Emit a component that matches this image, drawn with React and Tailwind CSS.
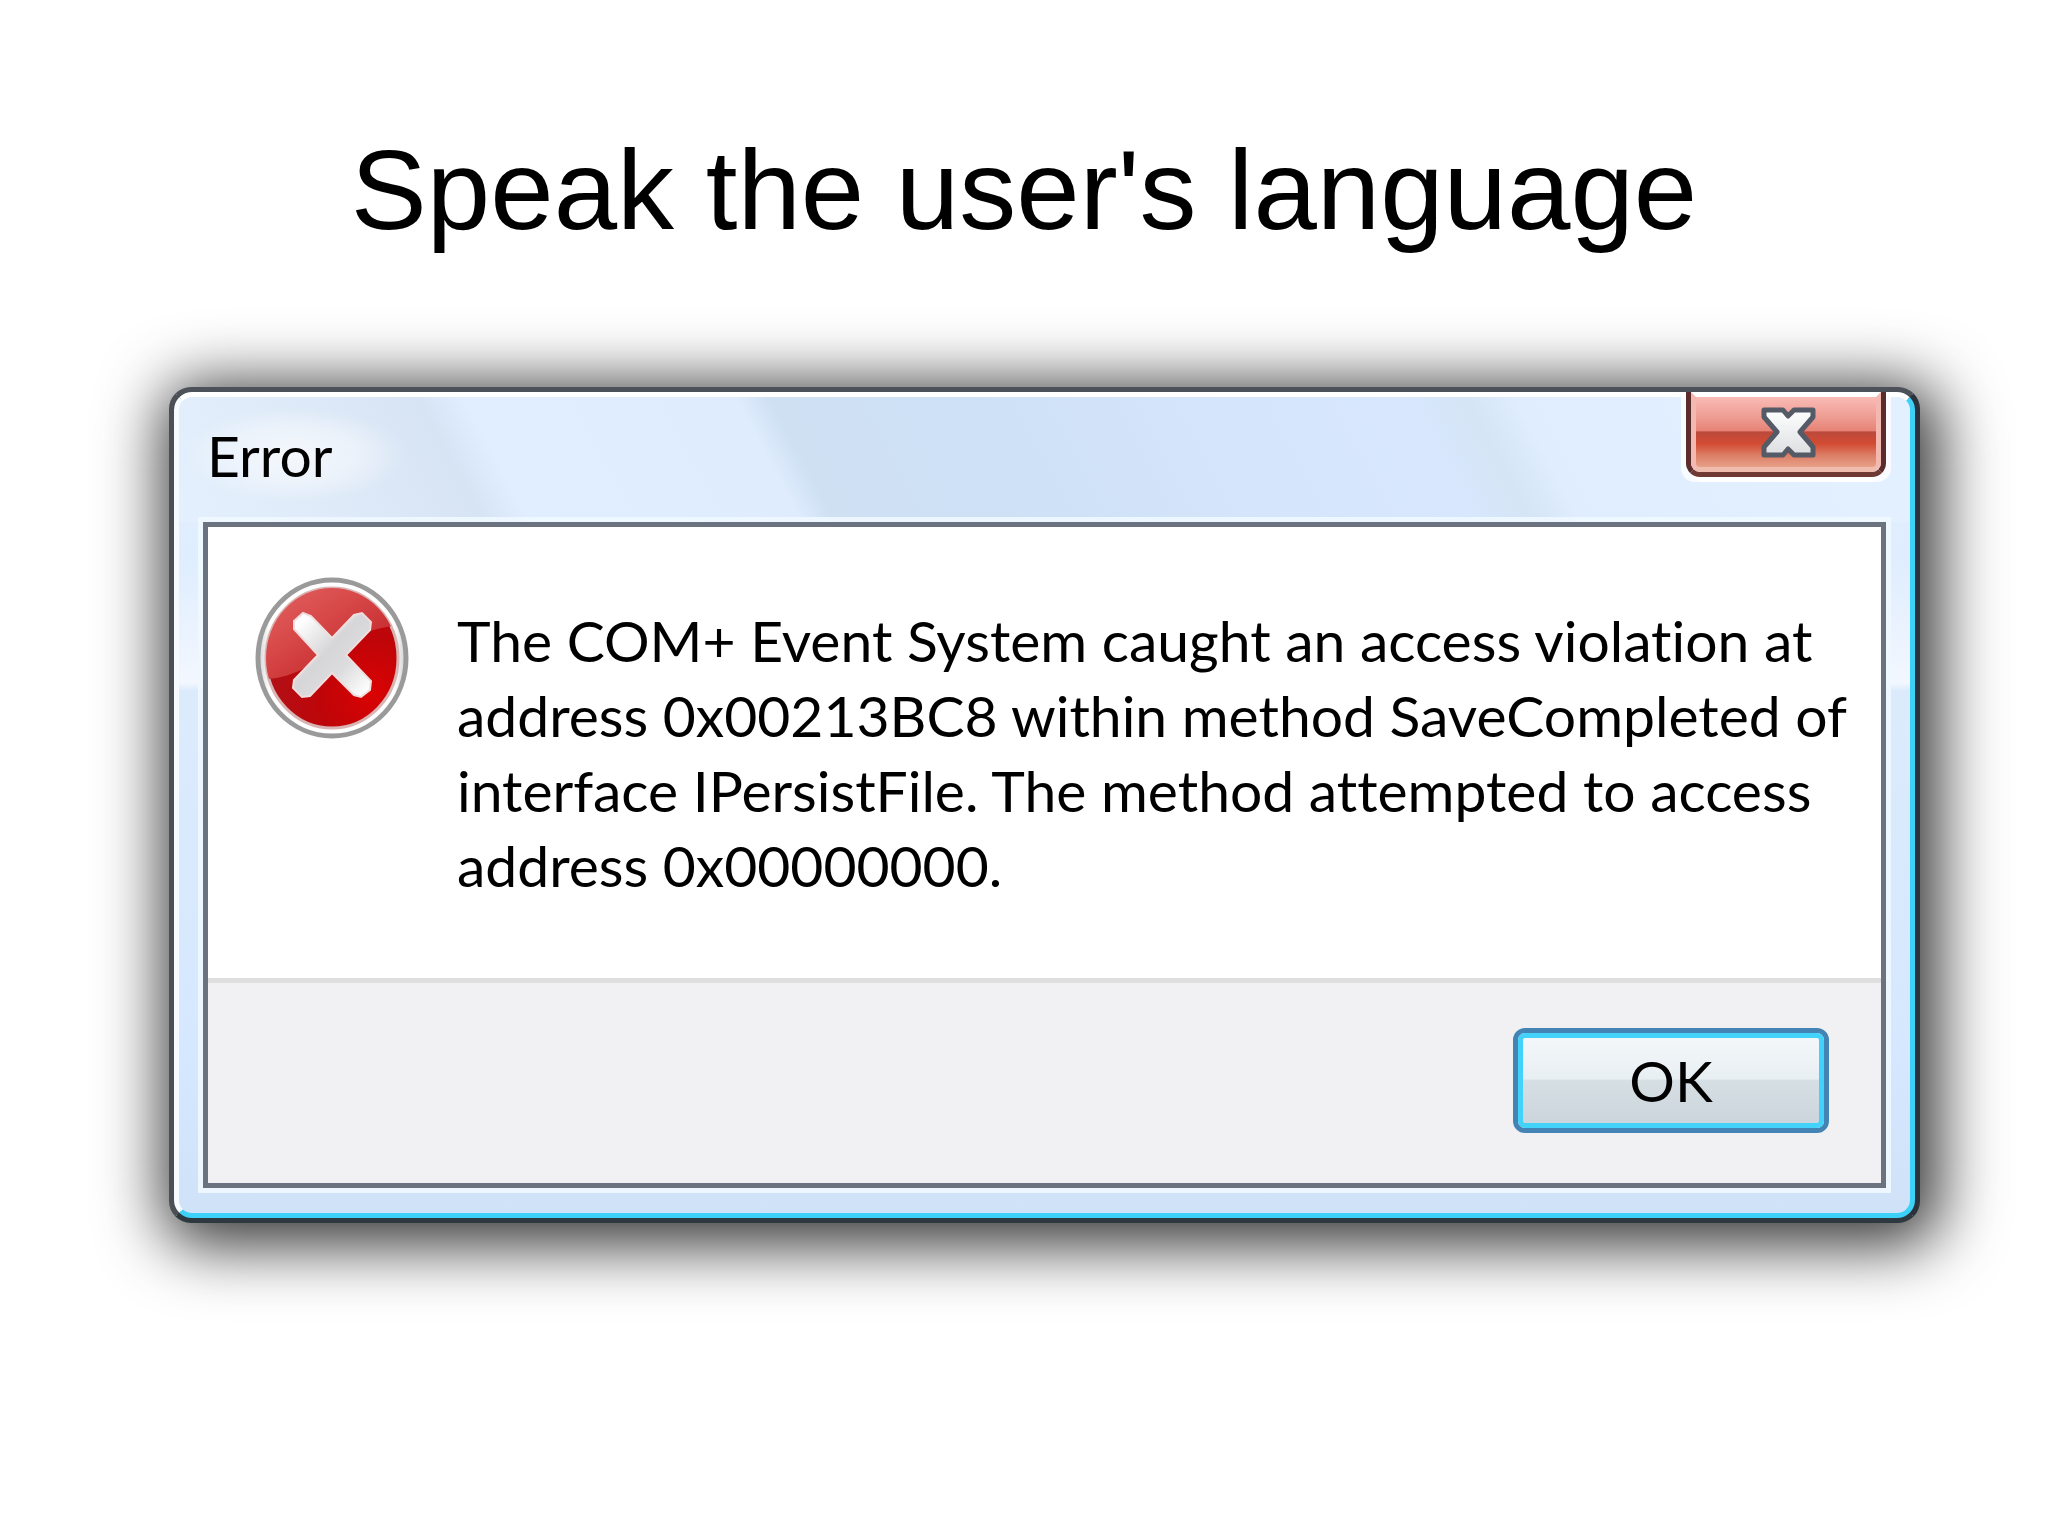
import { useState } from "react";

const message = [
  "The COM+ Event System caught an access violation at",
  "address 0x00213BC8 within method SaveCompleted of",
  "interface IPersistFile. The method attempted to access",
  "address 0x00000000.",
];

const ErrorIcon = () => (
  <svg viewBox="0 0 154 162" className="w-[154px] h-[162px] shrink-0" aria-hidden="true">
    <defs>
      <linearGradient id="ring" x1="0" y1="0" x2="1" y2="0">
        <stop offset="0" stopColor="#d4d4d4" />
        <stop offset="0.08" stopColor="#ffffff" />
        <stop offset="0.92" stopColor="#ffffff" />
        <stop offset="1" stopColor="#cfcfcf" />
      </linearGradient>
      <radialGradient id="ball" cx="0.8" cy="0.75" r="0.8">
        <stop offset="0" stopColor="#da0202" />
        <stop offset="0.5" stopColor="#be0509" />
        <stop offset="1" stopColor="#b01218" />
      </radialGradient>
      <linearGradient id="gloss" x1="0" y1="0" x2="0.9" y2="0.9">
        <stop offset="0" stopColor="#e66a6a" />
        <stop offset="0.5" stopColor="#d64646" />
        <stop offset="1" stopColor="#bd1c20" />
      </linearGradient>
      <linearGradient id="cross" x1="0" y1="0" x2="1" y2="1">
        <stop offset="0.1" stopColor="#ffffff" />
        <stop offset="0.45" stopColor="#d6d6d8" />
        <stop offset="0.65" stopColor="#dcdcde" />
        <stop offset="0.95" stopColor="#ffffff" />
      </linearGradient>
      <clipPath id="ballClip">
        <ellipse cx="77" cy="81" rx="66" ry="70" />
      </clipPath>
    </defs>
    <ellipse cx="77" cy="81" rx="74" ry="78" fill="url(#ring)" stroke="#9a9a9a" strokeWidth="5" />
    <ellipse cx="77" cy="81" rx="66" ry="70" fill="url(#ball)" stroke="#d9b4b4" strokeWidth="3" />
    <path
      d="M0 0H154V48C126 48 104 56 82 70C62 84 42 100 12 102H0Z"
      fill="url(#gloss)"
      clipPath="url(#ballClip)"
    />
    <path
      d="M39 44L48 36L56 39L77 61L99 38L107 36L116 45L115 53L91 78L116 104L115 113L106 120L99 118L77 96L55 119L47 120L38 111L39 103L63 78L39 52Z"
      fill="url(#cross)"
      stroke="#f0dede"
      strokeWidth="2"
    />
  </svg>
);

const CloseGlyph = () => (
  <svg viewBox="0 0 55 51" className="w-[55px] h-[51px]" aria-hidden="true">
    <defs>
      <linearGradient id="closeFill" x1="0" y1="0" x2="0" y2="1">
        <stop offset="0" stopColor="#ffffff" />
        <stop offset="1" stopColor="#dcdee0" />
      </linearGradient>
    </defs>
    <path
      d="M3 3H22L27 9L33 3H52V10L39 25L52 40V48H33L27 42L22 48H3V40L16 25L3 10Z"
      fill="url(#closeFill)"
      stroke="#555b66"
      strokeWidth="5"
      strokeLinejoin="round"
    />
  </svg>
);

const TitleBar = ({ title, onClose }) => (
  <header className="flex h-[125px] items-start justify-between rounded-t-[15px] px-6 bg-[linear-gradient(62deg,#e4f0fd_0px,#dfebf9_130px,#d7e4f4_270px,#e0eeff_310px,#deecfd_550px,#cfe0f3_580px,#cee1f6_760px,#d5e5fb_950px,#d8e7fd_1140px,#d5e5f5_1195px,#dfedfe_1238px,#e3f0ff_1500px)]">
    <h2
      id="dialog-title"
      className="-ml-5 mt-2.5 w-56 pl-6 text-[57px] leading-[96px] text-black bg-[radial-gradient(closest-side,rgba(247,249,252,0.9),rgba(245,248,252,0.6)_55%,transparent)]"
    >
      {title}
    </h2>
    <button
      type="button"
      aria-label="Close"
      onClick={onClose}
      className="-mt-[5px] flex h-[85px] w-[200px] shrink-0 justify-center rounded-b-[14px] border-x-5 border-b-5 border-x-[#5c2b2b] border-b-[#703a34] shadow-[5px_5px_0_0_rgba(255,255,255,0.8),-5px_5px_0_0_rgba(255,255,255,0.8)]"
    >
      <span className="flex h-full w-full items-start justify-center rounded-b-[9px] border-5 border-t-white border-x-[#f3b9b1] border-b-[#f0bcae] pl-1 pt-2.5 bg-[linear-gradient(180deg,#f9bbb5_0%,#ee9b91_30%,#e78377_48%,#bb4a3c_50%,#d24a31_66%,#dc8068_84%,#e8a088_100%)]">
        <CloseGlyph />
      </span>
    </button>
  </header>
);

const App = () => {
  const [open, setOpen] = useState(true);
  const close = () => setOpen(false);

  return (
    <main className="min-h-screen bg-white pl-[169px] pr-32 pt-[126px]">
      <h1 className="mb-[133px] -ml-[41px] text-center font-['Liberation_Sans',sans-serif] text-[114px] leading-[128px] text-black">
        Speak the user's language
      </h1>

      {open && (
        <section
          role="dialog"
          aria-labelledby="dialog-title"
          className="rounded-[22px] border-5 border-t-[#4c515a] border-l-[#4c4f54] border-r-[#2b323c] border-b-[#2d393f] bg-[#2d393f] font-[Lato,sans-serif] [font-variant-ligatures:none] shadow-[7px_10px_64px_12px_rgba(0,0,0,0.8)]"
        >
          <div className="rounded-[18px] border-5 border-t-white border-l-[#f7fbff] border-r-[#3cd2f8] border-b-[#3cd2f8] bg-[linear-gradient(180deg,#e2effe_0%,#dfedfe_20%,#f3f7ff_35%,#dcebfc_36%,#d6e8ff_80%,#cfe2f8_100%)]">
            <TitleBar title="Error" onClose={close} />

            {/* Client area */}
            <div className="mx-6 mb-[25px] border-5 border-[#6b7380] bg-white shadow-[0_0_0_5px_rgba(240,248,255,0.9)]">
              <div className="flex items-start gap-12 border-b-5 border-[#dfdfdf] pb-[75px] pl-[47px] pt-[50px]">
                <ErrorIcon />
                <p className="mt-[26px] text-[57px] leading-[75px] text-black">
                  {message.map((line) => (
                    <span key={line} className="block whitespace-nowrap">
                      {line}
                    </span>
                  ))}
                </p>
              </div>

              {/* Buttons */}
              <div className="flex justify-end bg-[#f1f0f2] pb-[50px] pr-[52px] pt-[45px]">
                <button
                  type="button"
                  onClick={close}
                  className="h-[105px] w-[316px] rounded-[12px] border-5 border-[#4484b4] text-[57px] leading-[75px] text-black"
                >
                  <span className="flex h-full items-center justify-center rounded-[7px] border-5 border-[#43d3fa] bg-[linear-gradient(180deg,#f3f7f9_0%,#e8eff3_48%,#d6dfe3_50%,#cbd5dc_100%)]">
                    OK
                  </span>
                </button>
              </div>
            </div>
          </div>
        </section>
      )}
    </main>
  );
};

export default App;
